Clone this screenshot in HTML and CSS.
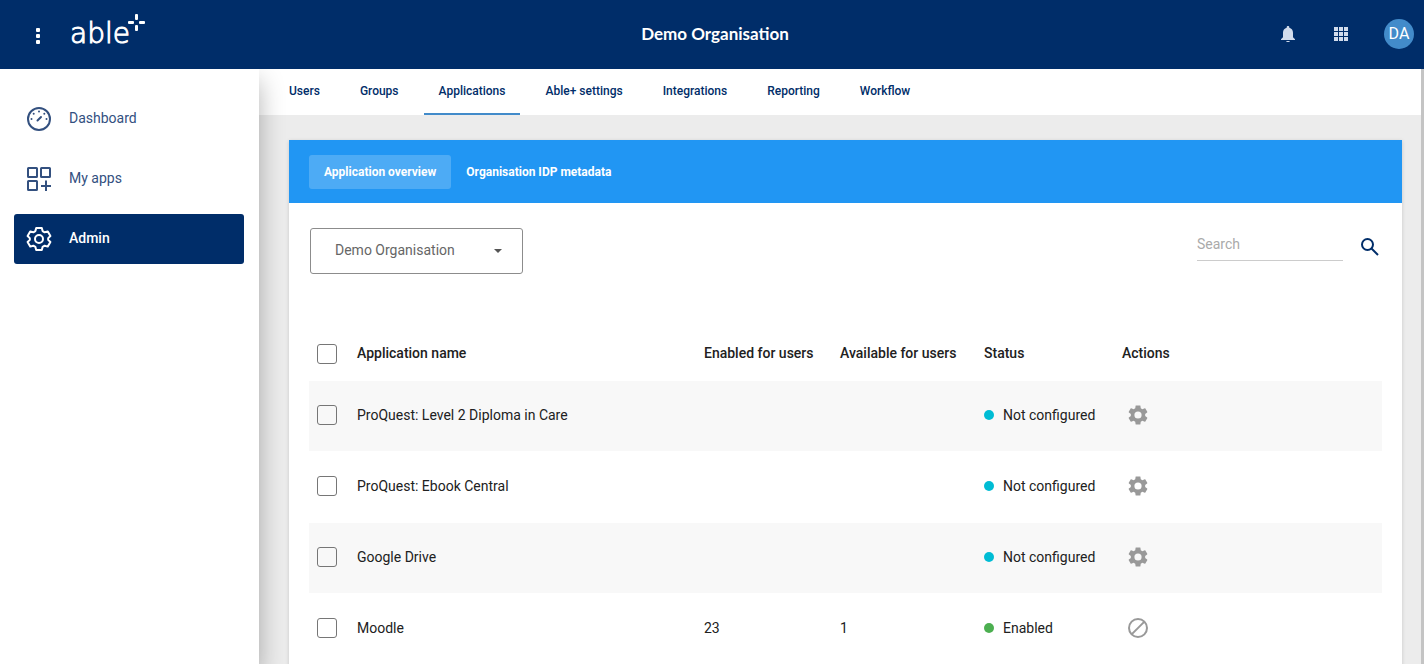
FILE: index.html
```html
<!DOCTYPE html>
<html lang="en">
<head>
<meta charset="utf-8">
<meta name="viewport" content="width=device-width, initial-scale=1">
<title>Able+ | Applications</title>
<link rel="stylesheet" href="styles.css">
</head>
<body>
<svg class="sprite" aria-hidden="true">
  <symbol id="gear" viewBox="0 0 24 24"><path d="M19.14 12.94c.04-.3.06-.61.06-.94 0-.32-.02-.64-.07-.94l2.03-1.58c.18-.14.23-.41.12-.61l-1.92-3.32c-.12-.22-.37-.29-.59-.22l-2.39.96c-.5-.38-1.03-.7-1.62-.94l-.36-2.54c-.04-.24-.24-.41-.48-.41h-3.84c-.24 0-.43.17-.47.41l-.36 2.54c-.59.24-1.13.57-1.62.94l-2.39-.96c-.22-.08-.47 0-.59.22L2.74 8.87c-.12.21-.08.47.12.61l2.03 1.58c-.05.3-.09.63-.09.94s.02.64.07.94l-2.03 1.58c-.18.14-.23.41-.12.61l1.92 3.32c.12.22.37.29.59.22l2.39-.96c.5.38 1.03.7 1.62.94l.36 2.54c.05.24.24.41.48.41h3.84c.24 0 .44-.17.47-.41l.36-2.54c.59-.24 1.13-.56 1.62-.94l2.39.96c.22.08.47 0 .59-.22l1.92-3.32c.12-.22.07-.47-.12-.61zM12 15.6A3.6 3.6 0 1 1 12 8.4a3.6 3.6 0 0 1 0 7.2z"/></symbol>
</svg>

<header class="topbar">
  <div class="brand">
    <button class="icon-button menu-button" aria-label="Menu">
      <svg width="6" height="18" viewBox="0 0 6 18" fill="#fff"><rect x="1" y="1" width="4" height="4" rx="1"/><rect x="1" y="7" width="4" height="4" rx="1"/><rect x="1" y="13" width="4" height="4" rx="1"/></svg>
    </button>
    <a class="logo" href="#" aria-label="able+">
      <span class="logo-word">able</span>
      <svg class="logo-plus" width="17" height="17" viewBox="0 0 17 17" fill="#fff"><rect x="7" y="0" width="3" height="6" rx="1"/><rect x="7" y="11" width="3" height="6" rx="1"/><rect x="0" y="7" width="6" height="3" rx="1"/><rect x="11" y="7" width="6" height="3" rx="1"/></svg>
    </a>
  </div>
  <h1 class="org-title">Demo Organisation</h1>
  <div class="tools">
    <button class="icon-button" aria-label="Notifications">
      <svg width="14" height="16" viewBox="0 0 14 16" fill="#d2dcec"><path d="M7 0c.8 0 1.3.5 1.3 1.3v.4C10.700 2.300 12 4.300 12 6.800v4.500l2 2v.700H0v-.7l2-2V6.800C2 4.300 3.300 2.300 5.700 1.700v-.4C5.700.5 6.200 0 7 0zM5 15h4c-.3.700-1 1-2 1s-1.700-.3-2-1z"/></svg>
    </button>
    <button class="icon-button" aria-label="Apps">
      <svg width="14" height="14" viewBox="0 0 14 14" fill="#d2dcec"><path d="M0 0h4v4H0zM5 0h4v4H5zM10 0h4v4h-4zM0 5h4v4H0zM5 5h4v4H5zM10 5h4v4h-4zM0 10h4v4H0zM5 10h4v4H5zM10 10h4v4h-4z"/></svg>
    </button>
    <button class="avatar">DA</button>
  </div>
</header>

<div class="layout">
  <nav class="sidebar" aria-label="Main">
    <a class="side-link" href="#">
      <svg width="26" height="26" viewBox="0 0 26 26" fill="none" stroke="currentColor" stroke-width="2"><circle cx="13" cy="13" r="11"/><path d="M11.500 14.500l3.500-3.500" stroke-width="2" stroke-linecap="round"/><g fill="currentColor" stroke="none"><circle cx="5.500" cy="13" r="1"/><circle cx="20.500" cy="13" r="1"/><circle cx="13" cy="5.500" r="1"/><circle cx="7.700" cy="7.700" r="1"/><circle cx="18.300" cy="7.700" r="1"/></g></svg>
      <span>Dashboard</span>
    </a>
    <a class="side-link" href="#">
      <svg width="26" height="26" viewBox="0 0 26 26" fill="none" stroke="currentColor" stroke-width="2"><rect x="2" y="2" width="9" height="9" rx="0.500"/><rect x="15" y="2" width="9" height="9" rx="0.500"/><rect x="2" y="15" width="9" height="9" rx="0.500"/><path d="M20 14.500v10.500M15 20h10"/></svg>
      <span>My apps</span>
    </a>
    <a class="side-link active" href="#" aria-current="page">
      <svg width="26" height="26" viewBox="0 0 26 26" fill="none" stroke="currentColor" stroke-width="2" stroke-linejoin="round"><circle cx="13" cy="13" r="4"/><path d="M10.200 2h5.600l.8 3.100 2.100 1.200 3.100-.9 2.600 4.600-2.200 2.100v1.800l2.200 2.100-2.600 4.600-3.100-.9-2.100 1.200-.8 3.100h-5.600l-.8-3.100-2.100-1.200-3.100.9L1.600 16l2.200-2.100v-1.800L1.600 10l2.600-4.600 3.100.9 2.100-1.200z"/></svg>
      <span>Admin</span>
    </a>
  </nav>

  <main class="main">
    <nav class="tabs" aria-label="Admin sections">
      <a class="tab" href="#">Users</a>
      <a class="tab" href="#">Groups</a>
      <a class="tab current" href="#">Applications</a>
      <a class="tab" href="#">Able+ settings</a>
      <a class="tab" href="#">Integrations</a>
      <a class="tab" href="#">Reporting</a>
      <a class="tab" href="#">Workflow</a>
    </nav>

    <section class="card">
      <div class="card-head">
        <a class="pill selected" href="#">Application overview</a>
        <a class="pill" href="#">Organisation IDP metadata</a>
      </div>
      <div class="card-body">
        <div class="filters">
          <div class="select-wrap">
            <select class="org-select" aria-label="Organisation"><option>Demo Organisation</option></select>
            <svg class="select-arrow" width="8" height="4" viewBox="0 0 8 4" fill="#555"><path d="M0 0h8L4 4z"/></svg>
          </div>
          <form class="search">
            <input class="search-input" type="search" placeholder="Search" aria-label="Search">
            <button class="icon-button search-button" type="button" aria-label="Search">
              <svg width="18" height="18" viewBox="0 0 18 18" fill="none" stroke="#002d69" stroke-width="2"><circle cx="6.500" cy="6.500" r="5.500"/><path d="M10.500 10.500l6.500 6.500"/></svg>
            </button>
          </form>
        </div>

        <table class="apps">
          <colgroup><col class="col-check"><col><col class="col-enabled"><col class="col-available"><col class="col-status"><col class="col-actions"></colgroup>
          <thead>
            <tr>
              <th><input type="checkbox" class="check" aria-label="Select all"></th>
              <th>Application name</th><th>Enabled for users</th><th>Available for users</th><th>Status</th><th>Actions</th>
            </tr>
          </thead>
          <tbody>
            <tr>
              <td><input type="checkbox" class="check" aria-label="Select ProQuest: Level 2 Diploma in Care"></td>
              <td>ProQuest: Level 2 Diploma in Care</td><td></td><td></td>
              <td><span class="status">Not configured</span></td>
              <td><button class="icon-button action" aria-label="Configure"><svg width="24" height="24"><use href="#gear"/></svg></button></td>
            </tr>
            <tr>
              <td><input type="checkbox" class="check" aria-label="Select ProQuest: Ebook Central"></td>
              <td>ProQuest: Ebook Central</td><td></td><td></td>
              <td><span class="status">Not configured</span></td>
              <td><button class="icon-button action" aria-label="Configure"><svg width="24" height="24"><use href="#gear"/></svg></button></td>
            </tr>
            <tr>
              <td><input type="checkbox" class="check" aria-label="Select Google Drive"></td>
              <td>Google Drive</td><td></td><td></td>
              <td><span class="status">Not configured</span></td>
              <td><button class="icon-button action" aria-label="Configure"><svg width="24" height="24"><use href="#gear"/></svg></button></td>
            </tr>
            <tr>
              <td><input type="checkbox" class="check" aria-label="Select Moodle"></td>
              <td>Moodle</td><td>23</td><td>1</td>
              <td><span class="status enabled">Enabled</span></td>
              <td><button class="icon-button action" aria-label="Disable"><svg width="24" height="24" viewBox="0 0 24 24" fill="none" stroke="currentColor" stroke-width="2"><circle cx="12" cy="12" r="9"/><path d="M5.600 18.400L18.400 5.600"/></svg></button></td>
            </tr>
          </tbody>
        </table>
      </div>
    </section>
  </main>
</div>
</body>
</html>
```
FILE: styles.css
```css
* { box-sizing: border-box; }

body {
  margin: 0;
  height: 100vh;
  display: flex;
  flex-direction: column;
  overflow: hidden;
  font: 14px/20px Roboto, "Liberation Sans", sans-serif;
  color: #212121;
  background: #ececec;
}

a { color: inherit; text-decoration: none; }
svg { display: block; }
.sprite { display: none; }

.icon-button {
  display: grid;
  place-items: center;
  padding: 0;
  border: 0;
  background: none;
  cursor: pointer;
}

.topbar {
  flex: none;
  display: grid;
  grid-template-columns: 1fr auto 1fr;
  align-items: center;
  height: 69px;
  padding: 0 10px 2px 16px;
  background: #002d69;
  color: #fff;
}

.brand { display: flex; align-items: center; gap: 20px; padding-left: 10px; }
.menu-button { width: 24px; height: 24px; margin-top: 4px; }
.logo { display: flex; align-items: flex-start; height: 40px; }
.logo-word {
  font: 200 28px/40px "DejaVu Sans", sans-serif;
  -webkit-text-stroke: 1px #fff;
}
.logo-plus { margin-left: -2px; }

.org-title {
  margin: 0;
  font: 700 17px/24px Lato, sans-serif;
}

.tools { display: flex; justify-content: flex-end; align-items: center; }
.tools .icon-button { width: 53px; height: 32px; }
.avatar {
  width: 30px;
  height: 30px;
  margin-left: 17px;
  padding: 0;
  border: 0;
  border-radius: 50%;
  background: #428bca;
  color: #fff;
  font: 16px/30px Roboto, sans-serif;
}

.layout { flex: 1; min-height: 0; display: flex; }

.sidebar {
  flex: 0 0 259px;
  display: flex;
  flex-direction: column;
  gap: 10px;
  padding: 25px 15px 0 14px;
  background: #fff;
  box-shadow: 0 12px 24px rgba(0, 0, 0, 0.3);
  clip-path: inset(0 -40px 0 0);
  z-index: 1;
}
.side-link {
  display: flex;
  align-items: center;
  gap: 17px;
  height: 50px;
  padding: 0 12px;
  border-radius: 3px;
  color: #33507f;
}
.side-link span { padding-bottom: 2px; }
.side-link.active { background: #002d69; color: #fff; font-weight: 500; }

.main {
  flex: 1;
  min-width: 0;
  overflow: hidden;
  border-right: 3px solid #c4c4c4;
}

.tabs {
  display: flex;
  gap: 10px;
  height: 46px;
  padding-left: 15px;
  background: #fff;
}
.tab {
  padding: 0 15px;
  border-bottom: 2px solid transparent;
  color: #002d69;
  font-size: 12px;
  font-weight: 500;
  line-height: 44px;
}
.tab.current { border-bottom-color: #428bca; }

.card {
  margin: 25px 19px 0 30px;
  background: #fff;
  box-shadow: 0 1px 4px rgba(0, 0, 0, 0.16);
}
.card-head {
  display: flex;
  padding: 15px 20px 14px;
  background: #2196f3;
}
.pill {
  padding: 0 15px;
  border-radius: 3px;
  color: #fff;
  font-size: 12px;
  font-weight: 700;
  line-height: 34px;
}
.pill.selected { background: rgba(255, 255, 255, 0.2); }

.card-body { padding: 25px 20px 20px; }

.filters { display: flex; justify-content: space-between; align-items: flex-start; margin-bottom: 51px; }
.select-wrap { position: relative; margin-left: 1px; }
.org-select {
  appearance: none;
  display: block;
  width: 213px;
  height: 46px;
  padding: 0 40px 2px 24px;
  border: 1px solid #8c8c8c;
  border-radius: 3px;
  background: #fff;
  color: #666;
  font: inherit;
}
.select-arrow { position: absolute; right: 21px; top: 21px; pointer-events: none; }

.search { display: flex; gap: 15px; }
.search-input {
  width: 146px;
  height: 33px;
  padding: 0;
  border: 0;
  border-bottom: 1px solid #ccc;
  background: none;
  font: inherit;
}
.search-input::placeholder { color: #aaa; }
.search-button { width: 24px; height: 37px; }

.apps { width: 100%; table-layout: fixed; border-collapse: separate; border-spacing: 0; }
.col-check { width: 40px; }
.col-enabled { width: 136px; }
.col-available { width: 144px; }
.col-status { width: 138px; }
.col-actions { width: 268px; }
.apps th, .apps td { padding: 0 8px; text-align: left; white-space: nowrap; }
.apps th { height: 56px; font-weight: 500; }
.apps td { height: 71px; padding-bottom: 2px; border-bottom: 1px solid #fff; }
.apps tbody tr:nth-child(odd) td { background: #f8f8f8; }

.check {
  appearance: none;
  display: block;
  width: 20px;
  height: 20px;
  margin: 0;
  border: 1px solid #767676;
  border-radius: 3px;
}
th .check { margin-top: 2px; }

.status { display: flex; align-items: center; gap: 9px; }
.status::before {
  content: "";
  width: 10px;
  height: 10px;
  border-radius: 50%;
  background: #00bcd4;
}
.status.enabled::before { background: #4caf50; }

.action { width: 32px; height: 32px; color: #999; fill: currentColor; }
```
